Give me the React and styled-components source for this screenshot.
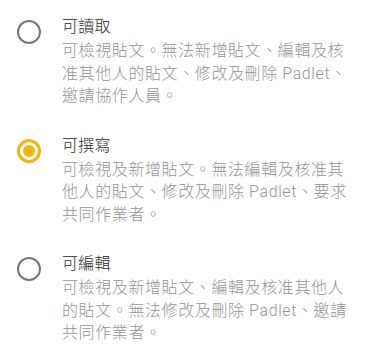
import React, { useState } from 'react';
import styled, { createGlobalStyle } from 'styled-components';

const GlobalStyle = createGlobalStyle`
  html, body {
    margin: 0;
    padding: 0;
    background: #ffffff;
  }
  body {
    font-family: Roboto, "Noto Sans CJK TC", "Noto Sans", sans-serif;
  }
`;

const List = styled.div`
  display: flex;
  flex-direction: column;
  gap: 26px;
  padding: 15px 0 0 17px;
  width: 350px;
`;

const Option = styled.label`
  display: flex;
  align-items: flex-start;
  gap: 21px;
  cursor: pointer;
`;

const HiddenInput = styled.input`
  position: absolute;
  opacity: 0;
  pointer-events: none;
`;

const Radio = styled.span`
  flex: none;
  box-sizing: border-box;
  width: 24px;
  height: 24px;
  margin-top: 5px;
  border-radius: 50%;
  border: ${(p) => (p.$checked ? '3px solid #f5b40c' : '2px solid #767676')};
  display: flex;
  align-items: center;
  justify-content: center;

  &::after {
    content: '';
    width: 12px;
    height: 12px;
    border-radius: 50%;
    background: #f5b40c;
    display: ${(p) => (p.$checked ? 'block' : 'none')};
  }
`;

const Body = styled.div`
  width: 292px;
  display: flex;
  flex-direction: column;
`;

const Title = styled.div`
  font-size: 16px;
  font-weight: 300;
  line-height: 24px;
  letter-spacing: 0.3px;
  color: #1f1f1f;
`;

const Description = styled.div`
  margin-top: 1px;
  font-size: 16px;
  font-weight: 300;
  line-height: 22.5px;
  letter-spacing: 0.6px;
  color: #939393;
`;

const options = [
  {
    id: 'read',
    title: '可讀取',
    description: '可檢視貼文。無法新增貼文、編輯及核准其他人的貼文、修改及刪除 Padlet、邀請協作人員。',
  },
  {
    id: 'write',
    title: '可撰寫',
    description: '可檢視及新增貼文。無法編輯及核准其他人的貼文、修改及刪除 Padlet、要求共同作業者。',
  },
  {
    id: 'edit',
    title: '可編輯',
    description: '可檢視及新增貼文、編輯及核准其他人的貼文。無法修改及刪除 Padlet、邀請共同作業者。',
  },
];

const App = () => {
  const [value, setValue] = useState('write');

  return (
    <>
      <GlobalStyle />
      <List lang="zh-Hant-TW">
        {options.map((opt) => (
          <Option key={opt.id}>
            <HiddenInput
              type="radio"
              name="permission"
              checked={value === opt.id}
              onChange={() => setValue(opt.id)}
            />
            <Radio $checked={value === opt.id} />
            <Body>
              <Title>{opt.title}</Title>
              <Description>{opt.description}</Description>
            </Body>
          </Option>
        ))}
      </List>
    </>
  );
};

export default App;
